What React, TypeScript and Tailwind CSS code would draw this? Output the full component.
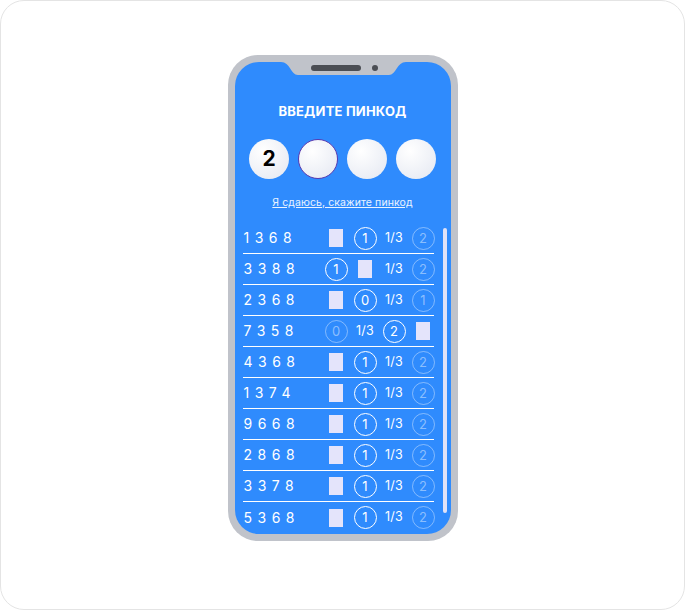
import React from "react";

type Cell = { t: "rect" } | { t: "c"; v: string } | { t: "f"; v: string } | { t: "frac" };

const rows: { code: string; cells: Cell[] }[] = [
  { code: "1368", cells: [{ t: "rect" }, { t: "c", v: "1" }, { t: "frac" }, { t: "f", v: "2" }] },
  { code: "3388", cells: [{ t: "c", v: "1" }, { t: "rect" }, { t: "frac" }, { t: "f", v: "2" }] },
  { code: "2368", cells: [{ t: "rect" }, { t: "c", v: "0" }, { t: "frac" }, { t: "f", v: "1" }] },
  { code: "7358", cells: [{ t: "f", v: "0" }, { t: "frac" }, { t: "c", v: "2" }, { t: "rect" }] },
  { code: "4368", cells: [{ t: "rect" }, { t: "c", v: "1" }, { t: "frac" }, { t: "f", v: "2" }] },
  { code: "1374", cells: [{ t: "rect" }, { t: "c", v: "1" }, { t: "frac" }, { t: "f", v: "2" }] },
  { code: "9668", cells: [{ t: "rect" }, { t: "c", v: "1" }, { t: "frac" }, { t: "f", v: "2" }] },
  { code: "2868", cells: [{ t: "rect" }, { t: "c", v: "1" }, { t: "frac" }, { t: "f", v: "2" }] },
  { code: "3378", cells: [{ t: "rect" }, { t: "c", v: "1" }, { t: "frac" }, { t: "f", v: "2" }] },
  { code: "5368", cells: [{ t: "rect" }, { t: "c", v: "1" }, { t: "frac" }, { t: "f", v: "2" }] },
];

function CellView({ c }: { c: Cell }) {
  if (c.t === "rect") return <div className="w-[14px] h-[18px] bg-[#e4e4fb]" />;
  if (c.t === "frac") return <span className="text-[12.5px] leading-none text-white tracking-[0.3px]">1/3</span>;
  if (c.t === "c")
    return (
      <div className="w-[23px] h-[23px] rounded-full border-[1.5px] border-white flex items-center justify-center text-[13px] leading-none text-white">
        {c.v}
      </div>
    );
  return (
    <div className="w-[23px] h-[23px] rounded-full border-[1.5px] border-white/40 flex items-center justify-center text-[13px] leading-none text-white/45">
      {c.v}
    </div>
  );
}

export default function App() {
  const font = { fontFamily: "Inter, 'Noto Sans', sans-serif" };
  return (
    <div className="w-[685px] h-[610px] bg-white" style={font}>
      <div className="w-[685px] h-[610px] border border-[#e4e4e4] rounded-[24px] box-border">
        <div className="mx-auto mt-[54px] w-[230px] h-[486px] rounded-[30px] bg-[#c0c3ca] p-[7px]">
          <div className="relative w-full h-full rounded-[24px] bg-[#2f8bfd] overflow-hidden flex flex-col items-center">
            <svg className="absolute left-0 top-0" width="216" height="16" viewBox="0 0 216 16">
              <path d="M46,0 C55,0 56,13 63,13 L154,13 C161,13 162,0 171,0 Z" fill="#c0c3ca" />
              <rect x="76" y="3" width="50" height="6" rx="3" fill="#4b4e54" />
              <circle cx="140" cy="6" r="3" fill="#4b4e54" />
            </svg>
            <div className="mt-[41px] text-[13px] leading-[16px] font-bold text-white tracking-[0.2px]">
              ВВЕДИТЕ ПИНКОД
            </div>
            <div className="mt-[20px] flex gap-[9px]">
              <div className="w-[40px] h-[40px] rounded-full bg-[radial-gradient(circle_at_35%_30%,#ffffff,#e3e7f1)] flex items-center justify-center text-[21px] font-bold text-black">
                2
              </div>
              <div className="w-[40px] h-[40px] rounded-full border border-[#5a3bb0] bg-[radial-gradient(circle_at_35%_30%,#ffffff,#e3e7f1)]" />
              <div className="w-[40px] h-[40px] rounded-full bg-[radial-gradient(circle_at_35%_30%,#ffffff,#e3e7f1)]" />
              <div className="w-[40px] h-[40px] rounded-full bg-[radial-gradient(circle_at_35%_30%,#ffffff,#e3e7f1)]" />
            </div>
            <div className="mt-[18px] text-[10.5px] leading-[12px] text-white/90 underline tracking-[0.1px]">
              Я сдаюсь, скажите пинкод
            </div>
            <div className="mt-[14px] w-full flex pl-[8px]">
              <div className="w-[191px] flex flex-col">
                {rows.map((r, i) => (
                  <div
                    key={i}
                    className={`h-[31px] shrink-0 grid grid-cols-[79px_29px_29px_29px_29px] items-center ${
                      i < rows.length - 1 ? "border-b border-white" : ""
                    }`}
                  >
                    <div className="pl-[1px] text-[14px] leading-none text-white tracking-[5.5px]">{r.code}</div>
                    {r.cells.map((c, j) => (
                      <div key={j} className="flex items-center justify-center">
                        <CellView c={c} />
                      </div>
                    ))}
                  </div>
                ))}
              </div>
              <div className="ml-[9px] mt-[5px] w-[4px] h-[285px] rounded-full bg-[#e0e2f7]" />
            </div>
          </div>
        </div>
      </div>
    </div>
  );
}
